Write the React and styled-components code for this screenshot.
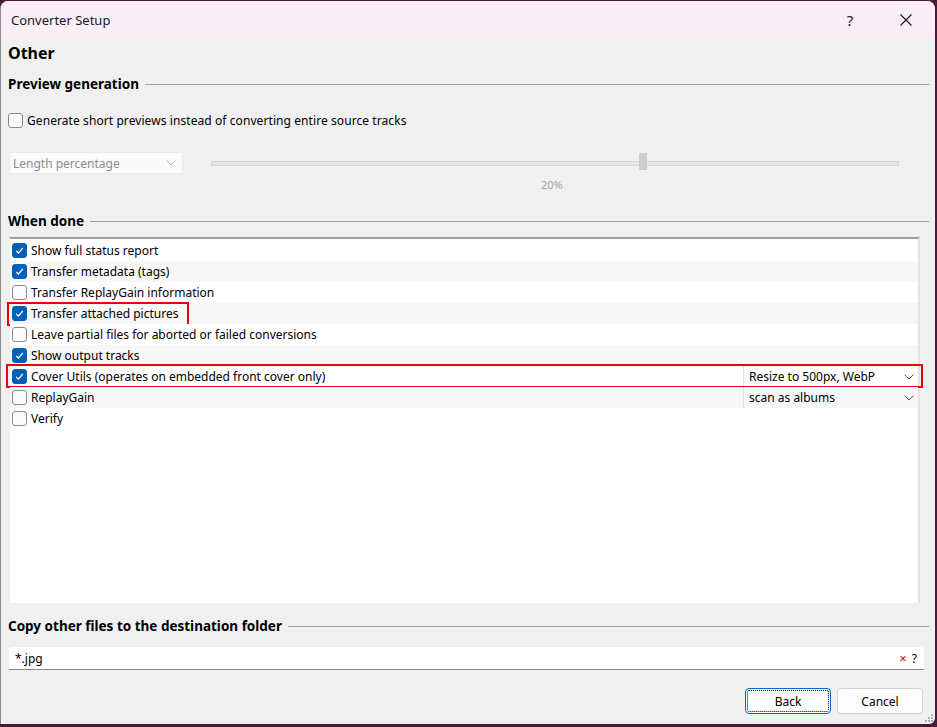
import React from "react"
import styled, { createGlobalStyle } from "styled-components"

const GlobalStyle = createGlobalStyle`
  html, body {
    margin: 0;
    padding: 0;
    background: #4a1b38;
  }
  body {
    font-family: "Noto Sans", "Open Sans", sans-serif;
    font-size: 12px;
    color: #000;
  }
`

const Window = styled.div`
  position: relative;
  box-sizing: border-box;
  width: 935px;
  height: 723px;
  margin-top: 1px;
  background: #f0f0f0;
  border-left: 1px solid #8c8c8c;
  border-radius: 8px 8px 6px 0;
  overflow: hidden;
  display: flex;
  flex-direction: column;
`

const TitleBar = styled.div`
  height: 37px;
  flex: none;
  background: #f9eef5;
  display: flex;
  align-items: center;
  padding-left: 10px;
`

const Title = styled.div`
  flex: 1;
  font-size: 13px;
  color: #1a1a1a;
`

const TitleButton = styled.div`
  width: 56px;
  text-align: center;
  font-size: 15px;
  color: #1a1a1a;
  display: flex;
  justify-content: center;
  align-items: center;
`

const Body = styled.div`
  flex: 1;
  padding: 0 6px 0 7px;
  display: flex;
  flex-direction: column;
`

const PageTitle = styled.div`
  font-size: 16px;
  font-weight: 700;
  height: 20px;
  line-height: 20px;
  margin-top: 5px;
`

const Section = styled.div`
  display: flex;
  align-items: center;
  gap: 6px;
  height: 18px;
  margin-top: ${(p) => p.$top}px;
  font-size: 13.5px;
  font-weight: 700;
  white-space: nowrap;

  &::after {
    content: "";
    flex: 1;
    height: 1px;
    background: #a0a0a0;
  }
`

const Box = styled.span`
  box-sizing: border-box;
  width: 15px;
  height: 15px;
  flex: none;
  border-radius: 3px;
  display: inline-flex;
  align-items: center;
  justify-content: center;
  background: ${(p) => (p.$on ? "#005fb8" : "#fbfbfb")};
  border: 1px solid ${(p) => (p.$on ? "#005fb8" : "#8a8a8a")};
`

const Check = ({ on }) => (
  <Box $on={on}>
    {on && (
      <svg width="9" height="9" viewBox="0 0 9 9">
        <path d="M1.2 4.8 L3.4 7 L7.8 2" fill="none" stroke="#fff" strokeWidth="1.2" />
      </svg>
    )}
  </Box>
)

const CheckRow = styled.label`
  display: flex;
  align-items: center;
  gap: 4px;
  height: 18px;
  margin-top: ${(p) => p.$top}px;
  letter-spacing: 0.08px;
`

const PreviewRow = styled.div`
  display: flex;
  align-items: center;
  margin-top: 23px;
  height: 22px;
`

const Combo = styled.div`
  box-sizing: border-box;
  width: 174px;
  height: 22px;
  margin-left: 1px;
  background: #fafafa;
  border: 1px solid #ebebeb;
  color: #8d8d8d;
  display: flex;
  align-items: center;
  justify-content: space-between;
  padding: 0 6px 0 3px;
`

const Chevron = ({ color = "#555" }) => (
  <svg width="10" height="6" viewBox="0 0 10 6">
    <path d="M0.5 0.5 L5 5 L9.5 0.5" fill="none" stroke={color} strokeWidth="1" />
  </svg>
)

const SliderWrap = styled.div`
  position: relative;
  margin-left: 28px;
  width: 688px;
  height: 22px;
  display: flex;
  align-items: center;
`

const Track = styled.div`
  box-sizing: border-box;
  width: 100%;
  height: 5px;
  background: #e6e6e6;
  border: 1px solid #d6d6d6;
`

const Handle = styled.div`
  position: absolute;
  top: 1px;
  width: 8px;
  height: 17px;
  background: #cdcdcd;
`

const Percent = styled.div`
  margin-left: 533px;
  margin-top: 4px;
  height: 14px;
  line-height: 14px;
  font-size: 11px;
  color: #a3a3a3;
`

const List = styled.div`
  box-sizing: border-box;
  margin-top: 7px;
  margin-left: 1px;
  width: 911px;
  height: 366px;
  background: #fff;
  border-top: 2px solid #a0a0a0;
  border-right: 2px solid #e3e3e3;
  border-left: 1px solid #ececec;
  display: flex;
  flex-direction: column;
  padding-top: 1px;
`

const Row = styled.div`
  position: relative;
  display: flex;
  align-items: center;
  height: 21px;
  flex: none;
  padding-left: 2px;
  gap: 4px;
  background: ${(p) => (p.$alt ? "#f7f7f7" : "#fff")};
`

const RowLabel = styled.span`
  flex: 1;
  white-space: nowrap;
`

const Cell = styled.div`
  box-sizing: border-box;
  width: 175px;
  height: 100%;
  border-left: 1px solid #e0e0e0;
  display: flex;
  align-items: center;
  justify-content: space-between;
  padding: 0 4px 0 5px;
`

const Highlight = styled.div`
  position: absolute;
  top: ${(p) => p.$y}px;
  left: ${(p) => p.$x}px;
  width: ${(p) => p.$w}px;
  height: 24px;
  border: 2px solid #e8000f;
  box-sizing: border-box;
  pointer-events: none;
`

const Input = styled.div`
  box-sizing: border-box;
  margin-top: 12px;
  margin-left: 1px;
  width: 915px;
  height: 23px;
  background: #fff;
  border-bottom: 1px solid #8a8a8a;
  border-radius: 3px 3px 0 0;
  display: flex;
  align-items: center;
  padding: 0 7px 0 6px;
`

const InputText = styled.span`
  flex: 1;
`

const Clear = styled.span`
  color: #b01010;
  font-size: 13px;
  margin-right: 5px;
`

const Buttons = styled.div`
  display: flex;
  justify-content: flex-end;
  gap: 6px;
  margin-top: 18px;
  padding-right: 6px;
`

const Button = styled.div`
  box-sizing: border-box;
  width: 86px;
  height: 26px;
  border-radius: 4px;
  background: #fdfdfd;
  border: 1px solid ${(p) => (p.$focus ? "#0067c0" : "#d0d0d0")};
  display: flex;
  align-items: center;
  justify-content: center;
  position: relative;

  &::before {
    content: "";
    display: ${(p) => (p.$focus ? "block" : "none")};
    position: absolute;
    inset: 1px;
    border: 1px dotted #000;
    border-radius: 2px;
  }
`

const Grip = styled.svg`
  position: absolute;
  right: 1px;
  bottom: 1px;
`

const items = [
  { label: "Show full status report", on: true },
  { label: "Transfer metadata (tags)", on: true },
  { label: "Transfer ReplayGain information", on: false },
  { label: "Transfer attached pictures", on: true, mark: [-3, -1, 182] },
  { label: "Leave partial files for aborted or failed conversions", on: false },
  { label: "Show output tracks", on: true },
  { label: "Cover Utils (operates on embedded front cover only)", on: true, cell: "Resize to 500px, WebP", mark: [-4, -2, 917] },
  { label: "ReplayGain", on: false, cell: "scan as albums" },
  { label: "Verify", on: false },
]

export default function App() {
  return (
    <>
      <GlobalStyle />
      <Window>
        <TitleBar>
          <Title>Converter Setup</Title>
          <TitleButton>?</TitleButton>
          <TitleButton>
            <svg width="12" height="12" viewBox="0 0 12 12">
              <path d="M0.5 0.5 L11.5 11.5 M11.5 0.5 L0.5 11.5" stroke="#1a1a1a" strokeWidth="1.1" />
            </svg>
          </TitleButton>
          <span style={{ width: 1 }} />
        </TitleBar>
        <Body>
          <PageTitle>Other</PageTitle>
          <Section $top={12}>Preview generation</Section>
          <CheckRow $top={18}>
            <Check on={false} />
            Generate short previews instead of converting entire source tracks
          </CheckRow>
          <PreviewRow>
            <Combo>
              Length percentage
              <Chevron color="#b8b8b8" />
            </Combo>
            <SliderWrap>
              <Track />
              <Handle style={{ left: `${0.622 * 688}px` }} />
            </SliderWrap>
          </PreviewRow>
          <Percent>20%</Percent>
          <Section $top={20}>When done</Section>
          <List>
            {items.map((it, i) => (
              <Row key={it.label} $alt={i % 2 === 1}>
                <Check on={it.on} />
                <RowLabel>{it.label}</RowLabel>
                {it.cell && (
                  <Cell>
                    {it.cell}
                    <Chevron />
                  </Cell>
                )}
                {it.mark && <Highlight $x={it.mark[0]} $y={it.mark[1]} $w={it.mark[2]} />}
              </Row>
            ))}
          </List>
          <Section $top={14}>Copy other files to the destination folder</Section>
          <Input>
            <InputText>*.jpg</InputText>
            <Clear>×</Clear>
            <span>?</span>
          </Input>
          <Buttons>
            <Button $focus>Back</Button>
            <Button>Cancel</Button>
          </Buttons>
        </Body>
        <Grip width="9" height="9" viewBox="0 0 9 9">
          <rect x="6" y="0" width="2" height="2" fill="#b0b0b0" />
          <rect x="3" y="3" width="2" height="2" fill="#b0b0b0" />
          <rect x="6" y="3" width="2" height="2" fill="#b0b0b0" />
          <rect x="0" y="6" width="2" height="2" fill="#b0b0b0" />
          <rect x="3" y="6" width="2" height="2" fill="#b0b0b0" />
          <rect x="6" y="6" width="2" height="2" fill="#b0b0b0" />
        </Grip>
      </Window>
    </>
  )
}
